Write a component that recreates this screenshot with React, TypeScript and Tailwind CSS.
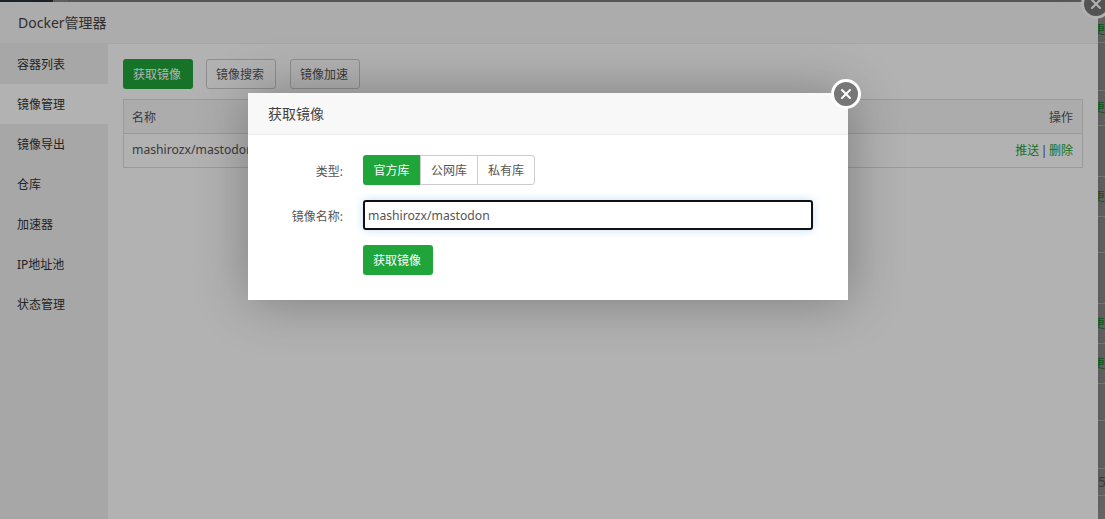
import { X } from "lucide-react";

const FONT = "font-['Noto_Sans','Noto_Sans_CJK_SC',sans-serif]";

const menu = ["容器列表", "镜像管理", "镜像导出", "仓库", "加速器", "IP地址池", "状态管理"];

// rows of the page that peeks out behind the docker panel
const backRows = [
  { h: "h-[41px]", text: "更新", extra: "pt-[16px]" },
  { h: "h-[48px]", text: "" },
  { h: "h-[35px]", text: "更新" },
  { h: "h-[51px]", text: "" },
  { h: "h-[40px]", text: "更新" },
  { h: "h-[36px]", text: "" },
  { h: "h-[51px]", text: "" },
  { h: "h-[40px]", text: "更新" },
  { h: "h-[40px]", text: "更新" },
  { h: "h-[37px]", text: "" },
  { h: "h-[48px]", text: "" },
  { h: "h-[27px]", text: "5", dark: true },
];

const App = () => {
  return (
    <div className={`relative h-[519px] w-[1105px] overflow-hidden bg-[#9d9d9d] ${FONT} text-xs text-[#555]`}>
      {/* top bar of the page behind */}
      <div className="flex h-[2px]">
        <div className="w-[53px] bg-[#2c3a42]" />
        <div className="w-[15px] bg-[#9d9d9d]" />
        <div className="flex-1 bg-[#8f8f8f]" />
      </div>

      <div className="flex h-[517px]">
        {/* docker panel */}
        <div className="flex w-[1098px] shrink-0 flex-col bg-white shadow-[1px_1px_50px_rgba(0,0,0,0.3)]">
          <div className="flex h-[42px] shrink-0 items-center border-b border-[#eee] bg-[#f6f6f6] pl-[18px] text-sm text-[#444]">
            Docker管理器
          </div>
          <div className="flex flex-1">
            <div className="w-[108px] shrink-0 bg-[#f0f0f0]">
              {menu.map((item, i) => (
                <div
                  key={item}
                  className={`flex h-10 items-center pl-[17px] pt-[2px] text-[#333] ${i === 1 ? "bg-white" : ""}`}
                >
                  {item}
                </div>
              ))}
            </div>
            <div className="flex-1 pl-[15px] pr-[15px] pt-[15px]">
              <div className="flex h-[30px]">
                <button className="h-[30px] w-[70px] rounded-[3px] bg-[#20a53a] pr-[2px] pt-[2px] text-white">
                  获取镜像
                </button>
                <button className="ml-[13px] h-[30px] w-[70px] rounded-[3px] border border-[#ccc] bg-white pr-[2px] pt-[2px] text-[#555]">
                  镜像搜索
                </button>
                <button className="ml-[14px] h-[30px] w-[70px] rounded-[3px] border border-[#ccc] bg-white pr-[2px] pt-[2px] text-[#555]">
                  镜像加速
                </button>
              </div>
              <div className="mt-[10px] border border-[#ddd]">
                <div className="flex h-[34px] items-center justify-between border-b border-[#ddd] bg-[#f6f6f6] pl-2 pr-[9px] pt-[2px]">
                  <span>名称</span>
                  <span>操作</span>
                </div>
                <div className="flex h-[33px] items-center justify-between pl-2 pr-[9px]">
                  <span className="text-[12.2px]">mashirozx/mastodon</span>
                  <span className="flex items-center">
                    <span className="text-[#20a53a]">推送</span>
                    <span className="mx-[1.5px]">|</span>
                    <span className="text-[#20a53a]">删除</span>
                  </span>
                </div>
              </div>
            </div>
          </div>
        </div>

        {/* sliver of the page behind */}
        <div className="flex-1 overflow-hidden whitespace-nowrap">
          {backRows.map((row, i) => (
            <div
              key={i}
              className={`flex items-center border-b border-[#a8a8a8] ${row.h} ${row.extra ?? ""} ${
                row.dark ? "text-sm text-[#555]" : "-ml-[5px] text-[#0f7a25]"
              }`}
            >
              {row.text}
            </div>
          ))}
        </div>
      </div>

      {/* close button of the docker panel */}
      <div className="absolute left-[1081px] top-[-11px] flex h-[30px] w-[30px] items-center justify-center rounded-full border-[3px] border-white bg-[#777]">
        <X size={16} strokeWidth={3} color="#fff" />
      </div>

      {/* shade */}
      <div className="absolute inset-0 bg-black/30" />

      {/* modal */}
      <div className="absolute left-[248px] top-[93px] h-[207px] w-[600px] bg-white text-[#555] shadow-[1px_1px_50px_rgba(0,0,0,0.3)]">
        <div className="flex h-[42px] items-center border-b border-[#eee] bg-[#f8f8f8] pl-5 text-sm text-[#444]">
          获取镜像
        </div>
        <div className="pt-5">
          <div className="flex h-[30px] items-center">
            <label className="w-[95px] pt-[4px] text-right">类型:</label>
            <div className="ml-5 flex h-[30px]">
              <div className="flex w-[57px] items-center justify-center rounded-l-[3px] bg-[#20a53a] pt-[2px] text-white">
                官方库
              </div>
              <div className="flex w-[57px] items-center justify-center border-y border-l border-[#ccc] pt-[2px]">
                公网库
              </div>
              <div className="flex w-[58px] items-center justify-center rounded-r-[3px] border border-[#ccc] pt-[2px]">
                私有库
              </div>
            </div>
          </div>
          <div className="mt-[15px] flex h-[30px] items-center">
            <label className="w-[95px] pt-[4px] text-right">镜像名称:</label>
            <input
              readOnly
              value="mashirozx/mastodon"
              className="ml-5 h-[30px] w-[450px] rounded-[3px] border-2 border-[#111] pl-[3px] text-[12.2px] text-[#555] shadow-[0_0_8px_rgba(102,175,233,0.4)] outline-none"
            />
          </div>
          <div className="mt-[15px] pl-[115px]">
            <button className="h-[30px] w-[70px] rounded-[3px] bg-[#20a53a] pr-[2px] pt-[2px] text-white">获取镜像</button>
          </div>
        </div>
        <div className="absolute left-[583px] top-[-14px] flex h-[30px] w-[30px] items-center justify-center rounded-full border-[3px] border-white bg-[#777]">
          <X size={16} strokeWidth={3} color="#fff" />
        </div>
      </div>
    </div>
  );
};

export default App;
